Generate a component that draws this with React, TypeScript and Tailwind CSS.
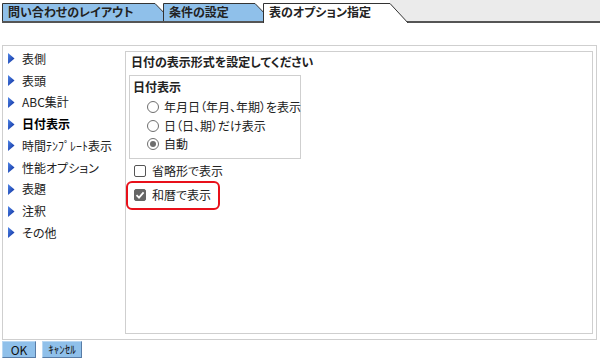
import React from "react";

const FONT = "font-['Noto_Sans_CJK_JP','Noto_Sans',sans-serif] [font-feature-settings:'palt']";

function Tab({
  label,
  width,
  top,
  active,
  className,
}: {
  label: string;
  width: number;
  top: number;
  active?: boolean;
  className?: string;
}) {
  return (
    <div className={`relative h-[20px] shrink-0 ${className ?? ""}`} style={{ width }}>
      <svg className="absolute inset-0" width={width} height={20}>
        <path
          d={`M0.5,${active ? 21 : 19} V0.5 H${top} L${width - 1},${active ? 21 : 19}`}
          fill={active ? "#ffffff" : "#8fc0ea"}
          stroke="#333"
          strokeWidth={1}
        />
        {!active && <rect x={0} y={18} width={width} height={2} fill="#555" />}
      </svg>
      <span className="relative flex h-[18px] items-center whitespace-nowrap pl-[6px] text-[12px] font-bold text-[#222]">
        {label}
      </span>
    </div>
  );
}

function Arrow() {
  return (
    <svg width="7" height="11" viewBox="0 0 7 11" className="shrink-0">
      <defs>
        <linearGradient id="ar" x1="0" y1="0" x2="1" y2="1">
          <stop offset="0" stopColor="#4f86e8" />
          <stop offset="1" stopColor="#0a2a9a" />
        </linearGradient>
      </defs>
      <polygon points="0,0 6.5,5.5 0,11" fill="url(#ar)" />
    </svg>
  );
}

const navItems = [
  "表側",
  "表頭",
  "ABC集計",
  "日付表示",
  "時間ﾃﾝﾌﾟﾚｰﾄ表示",
  "性能オプション",
  "表題",
  "注釈",
  "その他",
];

function Radio({ label, checked }: { label: string; checked?: boolean }) {
  return (
    <div className="flex h-[18.5px] items-center whitespace-nowrap">
      <span className="ml-[17px] flex h-[12px] w-[12px] shrink-0 items-center justify-center rounded-full border border-[#6e6e6e] bg-white">
        {checked && <span className="h-[6px] w-[6px] rounded-full bg-[#6e6e6e]" />}
      </span>
      <span className="ml-[5px] text-[12px] leading-[16px] text-[#222]">{label}</span>
    </div>
  );
}

function Check({ label, checked }: { label: string; checked?: boolean }) {
  return (
    <div className="flex h-[20px] items-center whitespace-nowrap">
      <span
        className={`flex h-[12px] w-[12px] shrink-0 items-center justify-center rounded-[2px] border ${
          checked ? "border-[#666] bg-[#666]" : "border-[#555] bg-white"
        }`}
      >
        {checked && (
          <svg width="10" height="10" viewBox="0 0 10 10">
            <path d="M1.5,5.2 L4,7.6 L8.6,2.4" fill="none" stroke="#fff" strokeWidth="1.8" />
          </svg>
        )}
      </span>
      <span className="ml-[6px] text-[12px] leading-[16px] text-[#222]">{label}</span>
    </div>
  );
}

export default function App() {
  return (
    <div className={`h-[361px] w-[600px] overflow-hidden bg-white ${FONT}`}>
      {/* tab strip */}
      <div className="flex h-[23px] items-end">
        <Tab label="問い合わせのレイアウト" width={172} top={153} className="z-10 ml-[2px]" />
        <Tab label="条件の設定" width={111} top={92} className="z-20 ml-[-11px]" />
        <Tab label="表のオプション指定" width={147} top={127} active className="z-30 ml-[-11px]" />
        <div className="z-0 ml-[-20px] h-[23px] flex-1 border-b-2 border-[#555] bg-[#ebebeb]" />
      </div>

      {/* main frame */}
      <div className="ml-[2px] mt-[22px] flex h-[295px] w-[595px] border border-[#cfcfcf]">
        <ul className="w-[122px] shrink-0 pt-[2px]">
          {navItems.map((item) => (
            <li key={item} className="flex h-[21.75px] items-center gap-[7px] whitespace-nowrap pl-[5px]">
              <Arrow />
              <span
                className={`text-[12px] text-[#222] ${item === "日付表示" ? "font-bold text-black" : ""}`}
              >
                {item}
              </span>
            </li>
          ))}
        </ul>

        <div className="mt-[5px] h-[283px] w-[468px] border border-[#cfcfcf] pl-[3px]">
          <div className="ml-[2px] mt-[2px] text-[12px] font-bold leading-[16px] text-[#222]">
            日付の表示形式を設定してください
          </div>
          <div className="mt-[5px] h-[84px] w-[172px] border border-[#cfcfcf]">
            <div className="ml-[3px] mt-[3px] text-[12px] font-bold leading-[16px] text-[#222]">日付表示</div>
            <div className="mt-[3px]">
              <Radio label="年月日（年月、年期）を表示" />
              <Radio label="日（日、期）だけ表示" />
              <Radio label="自動" checked />
            </div>
          </div>
          <div className="ml-[5px] mt-[2px]">
            <Check label="省略形で表示" />
          </div>
          <div className="ml-[-3px] h-[29px] w-[94px] rounded-[6px] border-2 border-[#e8101a] pl-[6px] pt-[2px]">
            <Check label="和暦で表示" checked />
          </div>
        </div>
      </div>

      {/* buttons */}
      <div className="ml-[2px] mt-[1px] flex gap-[6px]">
        <button className="flex h-[17px] w-[34px] items-center justify-center border border-[#b8d7f2] border-b-[#587ca6] border-r-[#587ca6] bg-[#8fc0ea] text-[12px] text-[#111]">
          OK
        </button>
        <button className="flex h-[17px] w-[40px] items-center justify-center border border-[#b8d7f2] border-b-[#587ca6] border-r-[#587ca6] bg-[#8fc0ea] text-[11px] text-[#111]">
          ｷｬﾝｾﾙ
        </button>
      </div>
    </div>
  );
}
